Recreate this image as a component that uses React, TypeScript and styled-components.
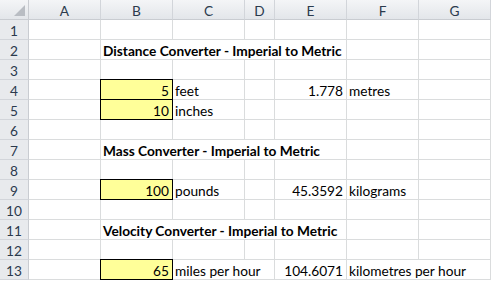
import styled, { createGlobalStyle, css } from 'styled-components';

const GlobalStyle = createGlobalStyle`
  html, body {
    margin: 0;
    padding: 0;
    background: #ffffff;
  }
`;

const COLS = ['A', 'B', 'C', 'D', 'E', 'F', 'G'];
const ROW_COUNT = 13;

type Kind = 'title' | 'input' | 'num' | 'label';

interface CellData {
  col: number;
  text: string;
  kind: Kind;
  span?: number;
}

const data: Record<number, CellData[]> = {
  2: [{ col: 2, span: 4, text: 'Distance Converter - Imperial to Metric', kind: 'title' }],
  4: [
    { col: 2, text: '5', kind: 'input' },
    { col: 3, text: 'feet', kind: 'label' },
    { col: 5, text: '1.778', kind: 'num' },
    { col: 6, text: 'metres', kind: 'label' },
  ],
  5: [
    { col: 2, text: '10', kind: 'input' },
    { col: 3, text: 'inches', kind: 'label' },
  ],
  7: [{ col: 2, span: 4, text: 'Mass Converter - Imperial to Metric', kind: 'title' }],
  9: [
    { col: 2, text: '100', kind: 'input' },
    { col: 3, text: 'pounds', kind: 'label' },
    { col: 5, text: '45.3592', kind: 'num' },
    { col: 6, text: 'kilograms', kind: 'label' },
  ],
  11: [{ col: 2, span: 4, text: 'Velocity Converter - Imperial to Metric', kind: 'title' }],
  13: [
    { col: 2, text: '65', kind: 'input' },
    { col: 3, span: 2, text: 'miles per hour', kind: 'label' },
    { col: 5, text: '104.6071', kind: 'num' },
    { col: 6, span: 2, text: 'kilometres per hour', kind: 'label' },
  ],
};

const Sheet = styled.div`
  display: grid;
  grid-template-columns: 29px 72px 72px 72px 30px 72px 72px 72px;
  grid-auto-rows: 20px;
  width: 491px;
  font-family: Lato, 'Open Sans', sans-serif;
  font-size: 13.7px;
  color: #000;
`;

const Corner = styled.div`
  position: relative;
  background: linear-gradient(#f4f5f7, #e3e6ea);
  border-right: 1px solid #c9ccd1;
  border-bottom: 1px solid #c9ccd1;
  box-sizing: border-box;
`;

const CornerMark = styled.svg`
  position: absolute;
  right: 3px;
  bottom: 3px;
`;

const ColHeader = styled.div`
  display: flex;
  align-items: center;
  justify-content: center;
  background: linear-gradient(#f4f5f7, #e3e6ea);
  border-right: 1px solid #d2d5da;
  border-bottom: 1px solid #c9ccd1;
  box-sizing: border-box;
  color: #2b3a4d;
  padding-top: 1px;
`;

const RowHeader = styled.div`
  display: flex;
  align-items: center;
  justify-content: center;
  background: #e8eaed;
  border-right: 1px solid #c9ccd1;
  border-bottom: 1px solid #d2d5da;
  box-sizing: border-box;
  color: #2b3a4d;
  padding-top: 1px;
`;

const Cell = styled.div<{ $kind?: Kind; $span?: number }>`
  position: relative;
  box-sizing: border-box;
  border-right: 1px solid #dadcdd;
  border-bottom: 1px solid #dadcdd;
  grid-column: span ${(p) => p.$span ?? 1};
  padding: 2px 2px 0 2px;
  line-height: 17px;
  white-space: nowrap;
  overflow: visible;
  text-align: ${(p) => (p.$kind === 'num' || p.$kind === 'input' ? 'right' : 'left')};
  ${(p) => (p.$kind === 'num' || p.$kind === 'input') && css`padding-right: 3px;`}
  ${(p) => p.$kind === 'title' && css`font-weight: 700;`}
  ${(p) =>
    p.$kind === 'input' &&
    css`
      background: #ffff99;
      &::before {
        content: '';
        position: absolute;
        top: -1px;
        left: -1px;
        right: -1px;
        bottom: -1px;
        border: 1px solid #000;
        pointer-events: none;
      }
    `}
`;

function SheetRow({ row }: { row: number }) {
  const items = data[row] ?? [];
  const out = [];
  let col = 1;
  while (col <= COLS.length) {
    const item = items.find((c) => c.col === col);
    if (item) {
      out.push(
        <Cell key={col} $kind={item.kind} $span={item.span}>
          {item.text}
        </Cell>
      );
      col += item.span ?? 1;
    } else {
      out.push(<Cell key={col} />);
      col += 1;
    }
  }
  return (
    <>
      <RowHeader>{row}</RowHeader>
      {out}
    </>
  );
}

export default function App() {
  const rows = Array.from({ length: ROW_COUNT }, (_, i) => i + 1);
  return (
    <>
      <GlobalStyle />
      <Sheet>
        <Corner>
          <CornerMark width="11" height="11" viewBox="0 0 11 11">
            <polygon points="11,0 11,11 0,11" fill="#b9bdc3" />
          </CornerMark>
        </Corner>
        {COLS.map((c) => (
          <ColHeader key={c}>{c}</ColHeader>
        ))}
        {rows.map((r) => (
          <SheetRow key={r} row={r} />
        ))}
      </Sheet>
    </>
  );
}
